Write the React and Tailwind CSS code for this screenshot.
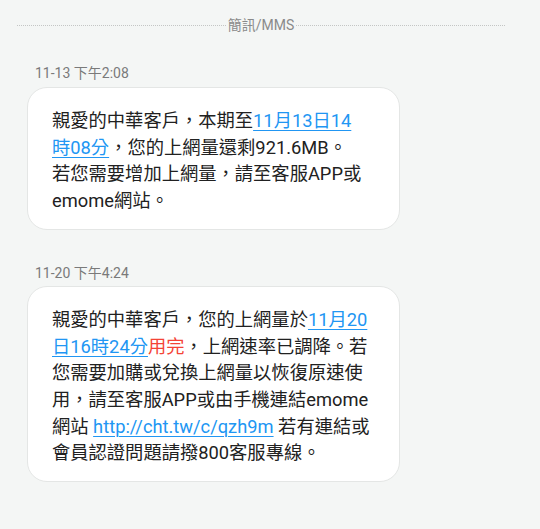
import React from "react";

const Link = ({ children }) => (
  <span className="text-[#2196f3] underline decoration-[1px] underline-offset-[3px]">{children}</span>
);

export default function App() {
  return (
    <div
      className="w-[540px] h-[529px] bg-[#f4f6f5] overflow-hidden"
      style={{ fontFamily: "Roboto, 'Noto Sans CJK TC', 'Noto Sans', sans-serif" }}
    >
      <div className="h-[50px] flex items-center px-[17px]">
        <div className="flex-1 border-t border-dotted border-[#c4c6c5]" />
        <div className="px-[2px] text-[14px] leading-[20px] text-[#8a8a8a]">簡訊/MMS</div>
        <div className="flex-1 border-t border-dotted border-[#c4c6c5]" />
        <div className="w-[18px]" />
      </div>

      <div className="px-[27px] flex flex-col">
        <div className="mt-[13px] pl-[8px] text-[14px] leading-[20px] text-[#7a7a7a]">11-13 下午2:08</div>
        <div className="mt-[4px] w-[373px] rounded-[20px] border border-[#e4e6e5] bg-white pl-[24px] pt-[20px] pb-[14px] text-[18.3px] leading-[26.7px] text-[#212121]">
          <div>
            親愛的中華客戶，本期至<Link>11月13日14</Link>
          </div>
          <div>
            <Link>時08分</Link>，您的上網量還剩921.6MB。
          </div>
          <div>若您需要增加上網量，請至客服APP或</div>
          <div>emome網站。</div>
        </div>

        <div className="mt-[33px] pl-[8px] text-[14px] leading-[20px] text-[#7a7a7a]">11-20 下午4:24</div>
        <div className="mt-[3px] w-[373px] rounded-[20px] border border-[#e4e6e5] bg-white pl-[24px] pt-[20px] pb-[14px] text-[18.3px] leading-[26.7px] text-[#212121]">
          <div>
            親愛的中華客戶，您的上網量於<Link>11月20</Link>
          </div>
          <div>
            <Link>日16時24分</Link>
            <span className="text-[#f44336]">用完</span>，上網速率已調降。若
          </div>
          <div>您需要加購或兌換上網量以恢復原速使</div>
          <div>用，請至客服APP或由手機連結emome</div>
          <div>
            網站 <Link>http://cht.tw/c/qzh9m</Link> 若有連結或
          </div>
          <div>會員認證問題請撥800客服專線。</div>
        </div>
      </div>
    </div>
  );
}
